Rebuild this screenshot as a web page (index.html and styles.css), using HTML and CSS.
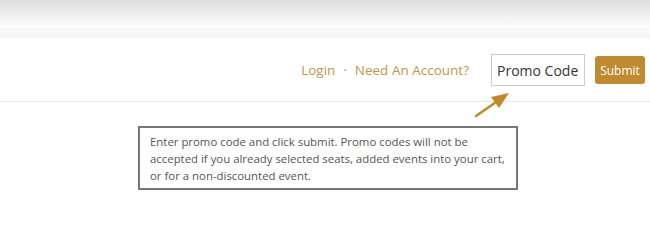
FILE: index.html
```html
<!DOCTYPE html>
<html>
<head>
<meta charset="utf-8">
<link rel="stylesheet" href="styles.css">
</head>
<body>
<div class="topband"></div>
<header class="header">
  <nav class="links">
    <a class="link" href="#">Login</a>
    <span class="sep">·</span>
    <a class="link" href="#">Need An Account?</a>
  </nav>
  <form class="promo">
    <input class="promo-input" type="text" value="Promo Code">
    <button class="promo-btn" type="button">Submit</button>
  </form>
</header>
<main class="main">
  <div class="tip">Enter promo code and click submit. Promo codes will not be accepted if you already selected seats, added events into your cart, or for a non-discounted event.</div>
  <svg class="arrow" width="40" height="30" viewBox="0 0 40 30">
    <line x1="5" y1="26" x2="28" y2="10" stroke="#c08a2c" stroke-width="2.6" stroke-linecap="round"/>
    <polygon points="38,3 20,7 28,18" fill="#c08a2c"/>
  </svg>
</main>
</body>
</html>
```
FILE: styles.css
```css
* { box-sizing: border-box; }
html, body { margin: 0; padding: 0; background: #fff; }
body { font-family: "Open Sans", "DejaVu Sans", sans-serif; width: 650px; height: 250px; overflow: hidden; }
.topband {
  height: 38px;
  background: linear-gradient(to bottom, #dcdcdc 0%, #f2f2f2 45%, #fbfbfb 70%, #f4f4f4 100%);
}
.header {
  height: 64px;
  border-top: 1px solid #fff;
  border-bottom: 1px solid #ececec;
  display: flex;
  justify-content: flex-end;
  align-items: center;
  padding-right: 5px;
}
.links { display: flex; align-items: center; font-size: 13.5px; margin-right: 22px; }
.link { color: #c4944e; text-decoration: none; }
.sep { color: #999; margin: 0 8px; font-size: 13px; }
.promo { display: flex; align-items: center; margin: 0; }
.promo-input {
  width: 94px; height: 32px;
  border: 1px solid #cccccc;
  font-family: "Open Sans", sans-serif;
  font-size: 14px; color: #333;
  padding: 0 5px;
  margin: 0 10px 0 0;
  border-radius: 0;
  outline: none;
}
.promo-btn {
  width: 50px; height: 28px;
  background: #c08b30;
  border: none; border-radius: 3px;
  color: #fff;
  font-family: "Open Sans", sans-serif;
  font-size: 12px;
  padding: 0;
}
.main { position: relative; padding: 24px 0 0 138px; }
.tip {
  width: 380px;
  border: 2px solid #777;
  padding: 5px 2px 4px 10px;
  font-size: 11.4px;
  line-height: 17px;
  color: #555;
}
.arrow { position: absolute; left: 471px; top: -12px; }
```
